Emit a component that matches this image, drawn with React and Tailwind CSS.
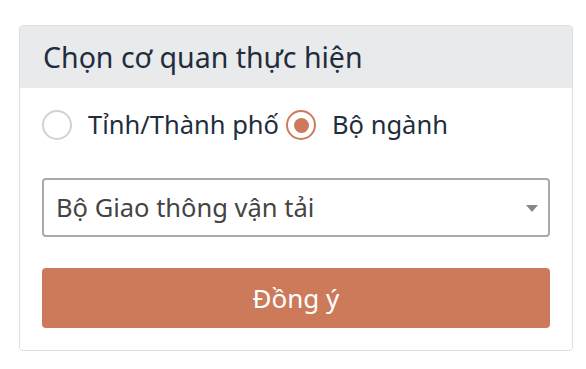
import { useState } from 'react';

const font = { fontFamily: '"Noto Sans", "Open Sans", sans-serif' };

function Radio({ checked, label, onClick }) {
  return (
    <label onClick={onClick} className="flex items-center cursor-pointer">
      <span
        className={
          'flex h-[30px] w-[30px] items-center justify-center rounded-full border-2 ' +
          (checked ? 'border-[#cd7a5a]' : 'border-[#cfd3d7]')
        }
      >
        {checked && <span className="h-[15px] w-[15px] rounded-full bg-[#cd7a5a]" />}
      </span>
      <span className="ml-[16px] text-[25.5px] leading-none text-[#1f2d3d]">{label}</span>
    </label>
  );
}

export default function App() {
  const [type, setType] = useState('bo');

  return (
    <div className="min-h-[369px] w-[586px] bg-white pl-[19px] pt-[25px]" style={font}>
      <div className="w-[554px] rounded-[4px] border border-[#dedfe0] bg-white">
        <div className="flex h-[62px] items-center bg-[#e9eaec] px-[23px]">
          <h2 className="text-[28.5px] leading-none text-[#1f2d3d]">Chọn cơ quan thực hiện</h2>
        </div>
        <div className="px-[22px] pb-[22px]">
          <div className="flex h-[74px] items-center gap-[7px]">
            <Radio checked={type === 'tinh'} label="Tỉnh/Thành phố" onClick={() => setType('tinh')} />
            <Radio checked={type === 'bo'} label="Bộ ngành" onClick={() => setType('bo')} />
          </div>
          <div className="relative mt-[16px] flex h-[59px] items-center rounded-[4px] border-2 border-[#a9a9a9] pl-[12px]">
            <span className="text-[25.5px] leading-none text-[#444]">Bộ Giao thông vận tải</span>
            <svg className="absolute right-[10px] top-[25px]" width="12" height="7" viewBox="0 0 12 7">
              <path d="M0 0h12L6 7z" fill="#888" />
            </svg>
          </div>
          <button className="mt-[31px] flex h-[60px] w-full items-center justify-center rounded-[4px] bg-[#cd7a5a] text-[26px] leading-none text-white">
            Đồng ý
          </button>
        </div>
      </div>
    </div>
  );
}
